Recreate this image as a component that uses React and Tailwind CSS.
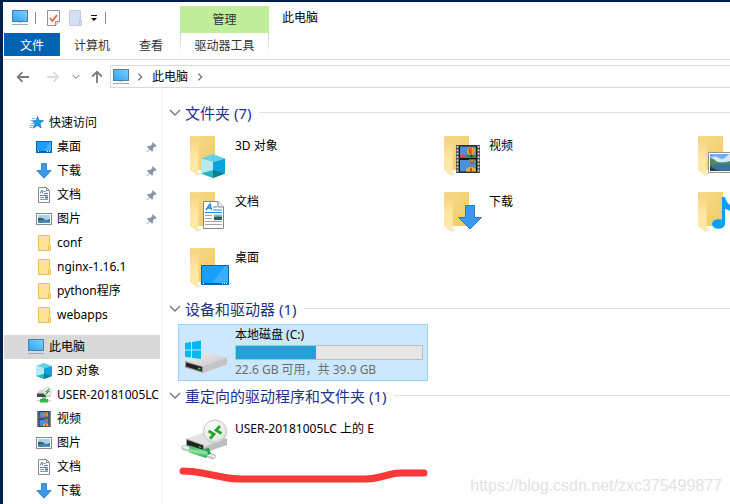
import React from "react";

const places = [
  { name: "桌面", icon: DesktopIcon, pinned: true },
  { name: "下载", icon: DownloadIcon, pinned: true },
  { name: "文档", icon: DocumentIcon, pinned: true },
  { name: "图片", icon: PictureIcon, pinned: true },
  { name: "conf", icon: SmallFolderIcon },
  { name: "nginx-1.16.1", icon: SmallFolderIcon },
  { name: "python程序", icon: SmallFolderIcon },
  { name: "webapps", icon: SmallFolderIcon },
];

const computer = [
  { name: "3D 对象", icon: CubeIcon },
  { name: "USER-20181005LC", icon: NetDriveIcon },
  { name: "视频", icon: FilmIcon },
  { name: "图片", icon: PictureIcon },
  { name: "文档", icon: DocumentIcon },
  { name: "下载", icon: DownloadIcon },
];

const folders = [
  { name: "3D 对象", badge: CubeBadge },
  { name: "视频", badge: FilmBadge },
  { name: "图片", badge: PictureBadge, wideOnly: true },
  { name: "文档", badge: DocumentBadge },
  { name: "下载", badge: DownloadBadge },
  { name: "音乐", badge: MusicBadge, wideOnly: true },
  { name: "桌面", badge: DesktopBadge },
];

// ---- small icons, 16px ----

function MonitorIcon() {
  return (
    <svg width="16" height="16" viewBox="0 0 16 16" className="shrink-0">
      <defs>
        <linearGradient id="screen" x1="0" y1="1" x2="1" y2="0">
          <stop offset="0" stopColor="#2ba4f5" />
          <stop offset="1" stopColor="#7fd0ff" />
        </linearGradient>
      </defs>
      <rect x="0.5" y="0.5" width="15" height="11" fill="url(#screen)" stroke="#4b80a5" />
      <path d="M6 12h4v1H6z" fill="#c9dbe8" />
      <path d="M0 14.5h16" stroke="#8fabc0" />
    </svg>
  );
}

function StarIcon() {
  return (
    <svg width="16" height="16" viewBox="0 0 16 16" className="shrink-0">
      <path
        d="M9.5 1.5l1.6 4 4.4.1-3.5 2.8 1.2 4.6-3.8-2.5-4.2 2.7 1.7-4.7-2.6-2.8 3.9-.1z"
        fill="#2799ec"
        stroke="#1272bd"
        strokeWidth="0.7"
      />
      <path d="M4 3.5h3M2.5 5.5h3M3 8.5h3M2 10.5h3M1.5 12.5h3" stroke="#62b5ef" strokeWidth="0.9" />
    </svg>
  );
}

function DesktopIcon() {
  return (
    <svg width="16" height="16" viewBox="0 0 16 16" className="shrink-0">
      <rect x="0.5" y="2.5" width="15" height="11" fill="#1d9dfb" stroke="#0768b0" />
      <path d="M8 12l6-9h1v9z" fill="#43b1ff" />
      <path d="M1 12.5h14" stroke="#0b5e9e" />
      <path d="M2 12.5h1M11 12.5h1M13 12.5h1" stroke="#fff" />
    </svg>
  );
}

function DownloadIcon() {
  return (
    <svg width="16" height="16" viewBox="0 0 16 16" className="shrink-0">
      <path d="M5.5.5h5v7h4.700L8 15.300.8 7.500h4.700z" fill="#3a97ea" stroke="#2678c6" strokeWidth="0.8" />
    </svg>
  );
}

function DocumentIcon() {
  return (
    <svg width="16" height="16" viewBox="0 0 16 16" className="shrink-0">
      <path d="M2.500.5h8l3 3v12h-11z" fill="#fff" stroke="#8a8a8a" />
      <path d="M10.500.5v3h3" fill="none" stroke="#8a8a8a" />
      <path d="M4 6.500l1.800-3.500 1 3.500M7.500 4.500h2M4 8.500h8M8 6.500h4" fill="none" stroke="#3195d3" />
      <path d="M4 10.500h4M4 12.500h8" stroke="#8a9ba8" />
      <path d="M9 9.500h3v2H9z" fill="#2f7ba5" />
    </svg>
  );
}

function PictureIcon() {
  return (
    <svg width="16" height="16" viewBox="0 0 16 16" className="shrink-0">
      <rect x="0.5" y="2.5" width="15" height="11" fill="#fff" stroke="#8c8c8c" />
      <path d="M2 4h12v8H2z" fill="#a5d2f5" />
      <path d="M2 7q4-1 6 1t6 0v4H2z" fill="#35685f" />
      <path d="M2 10q6-2 12 0v2H2z" fill="#4d87b8" />
    </svg>
  );
}

function SmallFolderIcon() {
  return (
    <svg width="16" height="16" viewBox="0 0 16 16" className="shrink-0">
      <path d="M2.500.5h11v10h1v5h-12z" fill="#ffe394" stroke="#e8c25a" />
      <path d="M12.500 15v-4.500h1" fill="none" stroke="#e8c25a" />
    </svg>
  );
}

function CubeIcon() {
  return (
    <svg width="16" height="16" viewBox="0 0 24 24" className="shrink-0">
      <CubeShape />
    </svg>
  );
}

function CubeShape() {
  return (
    <>
      <path d="M0 4.500L12 0l12 4.500L12 8z" fill="#62d3e6" />
      <path d="M0 4.500L12 8v16L0 19.500z" fill="#b5ebf3" />
      <path d="M12 8l12-3.500v15L12 24z" fill="#0ba4d8" />
      <path d="M0 19.500L12 16v8z" fill="#27b4c4" />
      <path d="M12 16l12 3.500L12 24z" fill="#087f93" />
    </>
  );
}

function NetDriveIcon() {
  return (
    <svg width="16" height="16" viewBox="0 0 16 16" className="shrink-0">
      <path d="M1 6l3-3h9l2 4v3H1z" fill="#d2d2d2" />
      <path d="M1 6.500h9v3.500H1z" fill="#4a4a4a" />
      <circle cx="11.500" cy="4.500" r="4.200" fill="#eef1ee" stroke="#c3c8c3" strokeWidth="0.600" />
      <path d="M9.500 4l2 1.500-2 1.800M13.500 2l-2 1.500 2 1.500" fill="none" stroke="#2ba52b" strokeWidth="1.300" />
      <path d="M6 10.500h4V13H6z" fill="#49bf59" />
      <path d="M1 13h14v1.500H1z" fill="#c9d2c9" />
      <path d="M4 12h8v3.500H4z" fill="#35b54a" />
    </svg>
  );
}

function FilmIcon() {
  return (
    <svg width="16" height="16" viewBox="0 0 24 28" className="shrink-0">
      <FilmShape />
    </svg>
  );
}

function FilmShape() {
  return (
    <>
      <path d="M0 0h24v28H0z" fill="#4e4e4e" />
      <path d="M1.500 1v27M22.500 1v27" stroke="#e4e4e4" strokeWidth="1.600" strokeDasharray="1.800 1.600" />
      <path d="M3.500 1h17v12.500h-17zM3.500 14.500h17V27h-17z" fill="#4a8ee0" stroke="#141414" />
      <path d="M4 10l4 1 4-1 8 1v2H4z" fill="#398b49" />
      <path d="M4 11q3-4 5 0t3 1H4z" fill="#d74c67" />
      <ellipse cx="15" cy="6" rx="4" ry="4" fill="#e5a52b" />
      <path d="M15 2v8M13 3l1 6" stroke="#c93036" />
      <path d="M14 10h3l-1 2h-1z" fill="#4b2b28" />
      <path d="M12.500 14.500h7l-3 5h-1z" fill="#e5a52b" />
      <path d="M14 15l2 4 2-4" fill="none" stroke="#6b3a7c" />
      <path d="M10 26.500q0-4.500 5-4.500t5 4.500z" fill="#e9b52e" />
      <path d="M14 26.500q0-4 1-4t1 4z" fill="#cf3333" />
    </>
  );
}

function PinIcon() {
  return (
    <svg width="11" height="11" viewBox="0 0 11 11" className="shrink-0">
      <path
        d="M7 .3L10.700 4l-1 .7-.8-.1-2 2 .1 2.300-.9.900-2.400-2.400L.8 10.500l-.5-.4 3-3L1 4.900l.9-.9 2.300.1 2-2L6.100 1.200z"
        fill="#8895a0"
      />
    </svg>
  );
}

function Chevron({ className, direction = "down" }) {
  const d = direction === "down" ? "M1 3l5 5 5-5" : "M4 2l4 4-4 4";
  return (
    <svg viewBox="0 0 12 12" className={className}>
      <path d={d} fill="none" stroke="currentColor" strokeWidth="1.400" />
    </svg>
  );
}

function ArrowIcon({ className }) {
  return (
    <svg width="14" height="14" viewBox="0 0 14 14" className={className}>
      <path d="M13 7H2M6.500 2.200L1.700 7l4.800 4.800" fill="none" stroke="currentColor" strokeWidth="1.800" />
    </svg>
  );
}

// ---- big folder icon and the badges on it ----

function FolderIcon({ badge: Badge }) {
  return (
    <svg width="51" height="45" viewBox="0 0 51 45" className="shrink-0 overflow-visible">
      <defs>
        <linearGradient id="folderBack" x1="0" y1="0" x2="1" y2="1">
          <stop offset="0" stopColor="#f8dc8d" />
          <stop offset="1" stopColor="#efca65" />
        </linearGradient>
        <linearGradient id="folderFront" x1="0" y1="0" x2="0" y2="1">
          <stop offset="0" stopColor="#f6cf79" />
          <stop offset="0.500" stopColor="#ffe5a0" />
          <stop offset="1" stopColor="#ffe9ad" />
        </linearGradient>
      </defs>
      <g transform="translate(6 0)">
        <path d="M8 40l4-3h-4z" fill="#e5e5e5" />
        <path d="M0 0h25v34H0z" fill="url(#folderBack)" />
        <path d="M0 0l8.500 5.500V38l-1.500 2-7-6z" fill="url(#folderFront)" />
        <Badge />
      </g>
    </svg>
  );
}

function CubeBadge() {
  return (
    <g transform="translate(11 18)">
      <CubeShape />
    </g>
  );
}

function FilmBadge() {
  return (
    <g transform="translate(12 9)">
      <FilmShape />
    </g>
  );
}

function PictureBadge() {
  return (
    <g transform="translate(10 16)">
      <path d="M.5.5h29v20H.5z" fill="#fff" stroke="#949494" />
      <path d="M2 2h26v17H2z" fill="#6db2ef" />
      <path d="M3 6q4-3 8 0t8-2 9 2v4H3z" fill="#d6ebfa" />
      <path d="M2 6q3 0 6 3t10 1 10 1v4H2z" fill="#4e8a5b" />
      <path d="M2 13q8-2 26 0v6H2z" fill="#3c7299" />
      <path d="M2 14q4 4 12 5H2z" fill="#23443b" />
    </g>
  );
}

function DocumentBadge() {
  return (
    <g transform="translate(13 9)">
      <path d="M.5.5H15l5.500 5.500v21.500H.5z" fill="#fff" stroke="#858585" />
      <path d="M15 .5V6h5.500" fill="#eee" stroke="#858585" />
      <path d="M3 9l4-6 1.500 6M4.500 7h3" fill="none" stroke="#2085cc" strokeWidth="1.400" />
      <path d="M10 6h4M10 9h9M2 11.500h17" stroke="#2a8fd4" />
      <path d="M2 14.500h7M2 17.500h7M2 20.500h17M2 23.500h17" stroke="#a3a3a3" />
      <path d="M11 13.500h8v5.500h-8z" fill="#79b8e6" />
      <path d="M11 16q4-1 8 0v3h-8z" fill="#2e6156" />
    </g>
  );
}

function DownloadBadge() {
  return (
    <path d="M21.500 13.500h9v12h7L26 37 14.500 25.500h7z" fill="#3c9aee" stroke="#257cc9" />
  );
}

function MusicBadge() {
  return (
    <g fill="#0c9ff5">
      <ellipse cx="20.500" cy="32" rx="6.500" ry="4.800" />
      <path d="M24 5h3q1 5 5 8t3 12q-1-7-8-8v15h-3z" />
    </g>
  );
}

function DesktopBadge() {
  return (
    <g transform="translate(11 17)">
      <path d="M.5.5h27v19H.5z" fill="#1a9fff" stroke="#0969af" />
      <path d="M11 18L24 1h3v17z" fill="#3aafff" />
      <path d="M1 18.500h26" stroke="#0d5a93" />
      <path d="M2 18.500h1M21 18.500h1M23 18.500h1M25 18.500h1" stroke="#fff" />
    </g>
  );
}

function DiskIcon() {
  return (
    <svg width="51" height="50" viewBox="0 0 51 50" className="shrink-0">
      <defs>
        <linearGradient id="diskTop" x1="0" y1="0" x2="1" y2="1">
          <stop offset="0" stopColor="#efefef" />
          <stop offset="1" stopColor="#c6c6c6" />
        </linearGradient>
      </defs>
      <path d="M1 36.500L20 30l7-2.500L43 33 19 42z" fill="url(#diskTop)" />
      <path d="M19 41.500L43 32.500v7L19 48z" fill="#c2c4c7" />
      <path d="M1 36L19 41.500V48L1 42.500z" fill="#9b9b9b" />
      <path d="M2 37.500l16 4.500v4.500L2 41.500z" fill="#232323" />
      <path d="M14 42.500l2.500.7v1.500L14 44z" fill="#38e03d" />
      <path d="M1 18l6-1v7.500H1zM8 17l9-1.500v9H8zM1 25.500h6v7L1 31.700zM8 25.500h9v8.500l-9-1.200z" fill="#00b7f0" />
    </svg>
  );
}

function NetworkDiskIcon() {
  return (
    <svg width="51" height="45" viewBox="0 0 51 45" className="shrink-0 overflow-visible">
      <defs>
        <radialGradient id="ball" cx="0.400" cy="0.300" r="0.800">
          <stop offset="0" stopColor="#fff" />
          <stop offset="0.700" stopColor="#e9ebea" />
          <stop offset="1" stopColor="#b4b8b6" />
        </radialGradient>
        <linearGradient id="pipe" x1="0.600" y1="0" x2="0.400" y2="1">
          <stop offset="0.200" stopColor="#3dbb5d" />
          <stop offset="0.500" stopColor="#93e6a4" />
          <stop offset="0.900" stopColor="#2ea24b" />
        </linearGradient>
      </defs>
      <path d="M2 20l16-6 25 6-23 9z" fill="#e2e2e2" />
      <path d="M20 28l23-9v7l-23 8z" fill="#bbbdc0" />
      <path d="M2 19.500L20 26v7L2 27z" fill="#a5a5a5" />
      <path d="M3 21l16 5.500V32L3 26z" fill="#202020" />
      <path d="M15 27l2 .7V29l-2-.7z" fill="#38e03d" />
      <path d="M0 28.500l29 9" stroke="#bcc3be" strokeWidth="5" strokeLinecap="round" />
      <path d="M0 28l29 9" stroke="#f3f5f4" strokeWidth="2.500" strokeLinecap="round" />
      <circle cx="29.500" cy="37.500" r="1.800" fill="#fff" stroke="#999" strokeWidth="0.700" />
      <path d="M15 31l10-2 2 6-4 1z" fill="#249d46" />
      <path d="M6 26.500l17 5.500q2 4-1 7L5 33.500q-1-4 1-7z" fill="url(#pipe)" />
      <circle cx="31" cy="12.500" r="11.500" fill="url(#ball)" stroke="#c2c6c4" />
      <path d="M24.500 12l5.500 3.200-4 4.500M36 7l-4 4.200 5.500 3.300" fill="none" stroke="#28a428" strokeWidth="2.800" />
    </svg>
  );
}

// ---- page parts ----

function Ribbon() {
  return (
    <header className="flex border-b border-[#dadada] pb-[3px]">
      <div className="w-[177px] shrink-0">
        <div className="flex h-[31px] items-center pl-[9px]">
          <MonitorIcon />
          <span className="ml-[7px] h-3 w-px bg-[#8a8a8a]" />
          <button aria-label="属性" className="ml-[11px]">
            <svg width="13" height="16" viewBox="0 0 13 16">
              <path d="M.5.5h12v11l-4 4h-8z" fill="#f7f9fb" stroke="#8f959d" />
              <path d="M8.500 15.500v-4h4" fill="#d9dee4" stroke="#8f959d" />
              <path d="M3 8l2.500 3L10 5" fill="none" stroke="#f0662a" strokeWidth="1.800" />
            </svg>
          </button>
          <button aria-label="新建文件夹" className="ml-[9px]">
            <svg width="14" height="16" viewBox="0 0 14 16">
              <path d="M.5.5h11v10h1v5H.5z" fill="#d4dff1" stroke="#c0cee6" />
              <path d="M10.500 15v-4.500h2" fill="none" stroke="#b7c6e0" />
            </svg>
          </button>
          <button aria-label="自定义快速访问工具栏" className="ml-[7px]">
            <svg width="8" height="8" viewBox="0 0 8 8">
              <path d="M1 1h6v1H1zM1 4h6L4 7z" fill="#111" />
            </svg>
          </button>
          <span className="ml-[7px] h-3 w-px bg-[#8a8a8a]" />
        </div>
        <div className="flex h-[23px] pl-px">
          <button className="w-14 bg-[#0063b1] pt-0.5 text-white">文件</button>
          <button className="w-16 pt-0.5 text-[#333]">计算机</button>
          <button className="w-[54px] pt-0.5 text-[#333]">查看</button>
        </div>
      </div>
      <div className="flex w-[89px] shrink-0 flex-col pt-1">
        <button className="h-[27px] bg-[#c1ee9a] text-[#333]">管理</button>
        <div className="flex h-[23px]">
          <span className="w-px bg-linear-to-b from-[#d0d0d0] to-white" />
          <button className="flex-1 pt-0.5 text-[#333]">驱动器工具</button>
          <span className="w-px bg-linear-to-b from-[#d0d0d0] to-white" />
        </div>
      </div>
      <h1 className="h-[31px] pl-[13px] leading-[31px]">此电脑</h1>
    </header>
  );
}

function AddressBar() {
  return (
    <div className="flex items-center pt-[5px]">
      <div className="flex w-[107px] shrink-0 items-center pl-[13px]">
        <button aria-label="后退" className="text-[#7a7a7a]">
          <ArrowIcon />
        </button>
        <button aria-label="前进" className="ml-4 text-[#dcdcdc]">
          <ArrowIcon className="rotate-180" />
        </button>
        <button aria-label="最近浏览的位置" className="ml-3 text-[#666]">
          <Chevron className="size-2" />
        </button>
        <button aria-label="上移" className="ml-[10px] text-[#7a7a7a]">
          <ArrowIcon className="rotate-90" />
        </button>
      </div>
      <div className="flex h-[23px] flex-1 items-center border-y border-l border-[#d9d9d9] pl-0.5">
        <MonitorIcon />
        <Chevron direction="right" className="ml-[6px] size-[10px] text-[#666]" />
        <button className="ml-[7px]">此电脑</button>
        <Chevron direction="right" className="ml-[7px] size-[10px] text-[#666]" />
      </div>
    </div>
  );
}

function TreeItem({ item }) {
  const Icon = item.icon;
  return (
    <li>
      <a href="#" className="flex h-6 items-center gap-[5px] overflow-hidden pr-[3px] pl-8">
        <Icon />
        <span className="flex-1 whitespace-nowrap">{item.name}</span>
        {item.pinned && <PinIcon />}
      </a>
    </li>
  );
}

function Sidebar() {
  return (
    <nav className="w-[160px] shrink-0 border-r border-[#f0f0f0] pt-[23px] pr-0.5 pl-px">
      <a href="#" className="flex h-6 items-center gap-[5px] pl-6">
        <StarIcon />
        快速访问
      </a>
      <ul className="mb-2">
        {places.map((item) => (
          <TreeItem key={item.name} item={item} />
        ))}
      </ul>
      <a href="#" className="flex h-6 items-center gap-[5px] bg-[#d9d9d9] pl-6">
        <MonitorIcon />
        此电脑
      </a>
      <ul>
        {computer.map((item) => (
          <TreeItem key={item.name} item={item} />
        ))}
      </ul>
    </nav>
  );
}

function GroupHeader({ children }) {
  return (
    <h2 className="flex h-7 items-center pb-[3px] pl-[6px] text-[15px] whitespace-nowrap text-[#1e3287]">
      <Chevron className="mr-1 size-3 text-[#777]" />
      {children}
      <span className="ml-2 h-px flex-1 bg-[#e2e2e2]" />
    </h2>
  );
}

function Tile({ icon, name, wideOnly }) {
  return (
    <button
      aria-label={name}
      className="flex h-14 w-[250px] items-start border border-transparent pt-[7px] pl-[5px] text-left"
    >
      {icon}
      <span className={wideOnly ? "hidden leading-5 md:inline" : "leading-5 whitespace-nowrap"}>
        {name}
      </span>
    </button>
  );
}

function DriveTile() {
  return (
    <button className="flex w-[250px] items-start border border-[#99d1ff] bg-[#cce8ff] pr-1 pl-[5px] text-left">
      <DiskIcon />
      <span className="flex-1 leading-5">
        <span className="block">本地磁盘 (C:)</span>
        <span className="block h-[15px] border border-[#bcbcbc] bg-[#e6e6e6]">
          <span className="block h-full w-[43%] bg-[#26a0da]" />
        </span>
        <span className="block text-[#6d6d6d]">22.6 GB 可用，共 39.9 GB</span>
      </span>
    </button>
  );
}

function App() {
  return (
    <div className="relative flex min-h-screen flex-col overflow-hidden bg-[#00204a] pt-0.5 pl-[3px] font-['Noto_Sans','Noto_Sans_CJK_SC',sans-serif] text-xs text-black">
      <div className="flex flex-1 flex-col bg-white">
        <Ribbon />
        <AddressBar />
        <div className="flex flex-1">
          <Sidebar />
          <main className="min-w-0 flex-1 overflow-hidden pt-3">
            <GroupHeader>文件夹 (7)</GroupHeader>
            <div className="grid grid-cols-[repeat(3,250px)] gap-x-1 pl-[15px]">
              {folders.map((folder) => (
                <Tile
                  key={folder.name}
                  name={folder.name}
                  wideOnly={folder.wideOnly}
                  icon={<FolderIcon badge={folder.badge} />}
                />
              ))}
            </div>

            <GroupHeader>设备和驱动器 (1)</GroupHeader>
            <div className="pb-0.5 pl-[15px]">
              <DriveTile />
            </div>

            <GroupHeader>重定向的驱动程序和文件夹 (1)</GroupHeader>
            <div className="pl-[15px]">
              <Tile name="USER-20181005LC 上的 E" icon={<NetworkDiskIcon />} />
              <svg width="250" height="18" viewBox="0 0 250 18">
                <path
                  d="M5 4Q14 4 24 6L47 10.500Q54 12 64 12H187Q194 12 200 10.500L214 7Q218 6 224 6H246"
                  fill="none"
                  stroke="#fb3838"
                  strokeWidth="7"
                  strokeLinecap="round"
                  strokeLinejoin="round"
                />
              </svg>
            </div>
          </main>
        </div>
      </div>
      <p className="absolute right-2 bottom-[6px] font-['Liberation_Sans',sans-serif] text-base text-[#e2e2e2]">
        https://blog.csdn.net/zxc375499877
      </p>
    </div>
  );
}

export default App;
